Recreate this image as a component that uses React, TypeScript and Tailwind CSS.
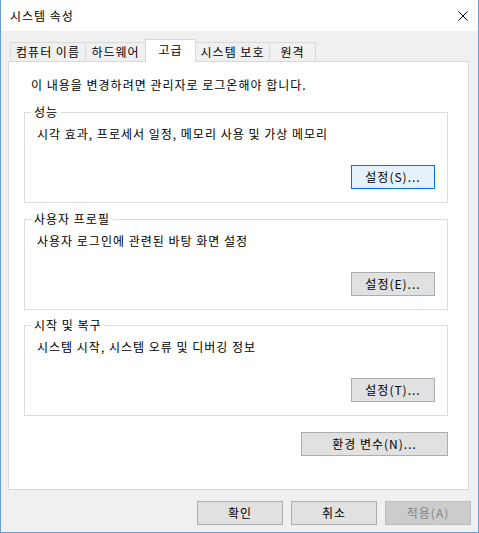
import React from "react";

const FONT = "font-['Noto_Sans_CJK_KR','Noto_Sans',sans-serif]";

const tabs = [
  { label: "컴퓨터 이름", w: "w-[76px]" },
  { label: "하드웨어", w: "w-[61px]" },
  { label: "고급", w: "w-[51px]", active: true },
  { label: "시스템 보호", w: "w-[75px]" },
  { label: "원격", w: "w-[47px]" },
];

function Button({ children, variant = "normal", width = "w-[84px]" }: { children: React.ReactNode; variant?: "normal" | "focus" | "disabled"; width?: string }) {
  const style =
    variant === "focus"
      ? "bg-[#e5f1fb] border-[#0078d7] text-black"
      : variant === "disabled"
      ? "bg-[#cccccc] border-[#bfbfbf] text-[#838383]"
      : "bg-[#e1e1e1] border-[#adadad] text-black";
  return (
    <div className={`${width} h-[24px] border ${style} flex items-center justify-center text-[12px] leading-[16px]`}>
      {children}
    </div>
  );
}

function Group({ title, text, button, className = "" }: { title: string; text: string; button: string; className?: string }) {
  return (
    <div className={`relative w-[424px] border border-[#dcdcdc] pl-[12px] pr-[12px] pt-[13px] pb-[13px] ${className}`}>
      <span className="absolute -top-[9px] left-[6px] px-[3px] bg-white leading-[16px]">{title}</span>
      <div className="leading-[16px]">{text}</div>
      <div className="mt-[23px] flex justify-end">
        <Button variant={button === "설정(S)..." ? "focus" : "normal"}>{button}</Button>
      </div>
    </div>
  );
}

export default function App() {
  return (
    <div className={`w-[479px] h-[533px] flex flex-col border-x border-b border-[#6c9fd2] text-[12px] tracking-[1px] text-black ${FONT}`}>
      {/* title bar */}
      <div className="h-[31px] bg-white flex items-center justify-between pl-[9px] pr-[10px]">
        <span className="leading-[16px]">시스템 속성</span>
        <svg width="10" height="10" viewBox="0 0 10 10">
          <path d="M0.5 0.5 L9.5 9.5 M9.5 0.5 L0.5 9.5" stroke="#000" strokeWidth="1" />
        </svg>
      </div>

      <div className="flex-1 bg-[#f0f0f0] pl-[7px] pr-[7px] pt-[8px] pb-[7px] flex flex-col">
        {/* tabs */}
        <div className="h-[22px] flex items-end pl-[2px]">
          {tabs.map((t, i) => (
            <div
              key={t.label}
              className={`${t.w} ${i > 0 ? "-ml-[1px]" : ""} ${
                t.active
                  ? "h-[23px] bg-white border-x border-t border-[#d9d9d9] relative z-10 -mb-[1px] pb-[3px]"
                  : "h-[19px] bg-[#f0f0f0] border-x border-t border-[#d9d9d9]"
              } flex items-center justify-center leading-[16px]`}
            >
              {t.label}
            </div>
          ))}
        </div>

        {/* panel */}
        <div className="w-[461px] h-[429px] bg-white border border-[#d9d9d9] pl-[15px] pt-[15px]">
          <div className="pl-[7px] leading-[16px]">이 내용을 변경하려면 관리자로 로그온해야 합니다.</div>
          <Group className="mt-[19px]" title="성능" text="시각 효과, 프로세서 일정, 메모리 사용 및 가상 메모리" button="설정(S)..." />
          <Group className="mt-[16px]" title="사용자 프로필" text="사용자 로그인에 관련된 바탕 화면 설정" button="설정(E)..." />
          <Group className="mt-[15px]" title="시작 및 복구" text="시스템 시작, 시스템 오류 및 디버깅 정보" button="설정(T)..." />
          <div className="w-[424px] mt-[16px] flex justify-end">
            <Button width="w-[147px]">환경 변수(N)...</Button>
          </div>
        </div>

        {/* dialog buttons */}
        <div className="mt-[11px] flex justify-end gap-[8px]">
          <Button width="w-[86px]">확인</Button>
          <Button width="w-[86px]">취소</Button>
          <Button width="w-[86px]" variant="disabled">적용(A)</Button>
        </div>
      </div>
    </div>
  );
}
